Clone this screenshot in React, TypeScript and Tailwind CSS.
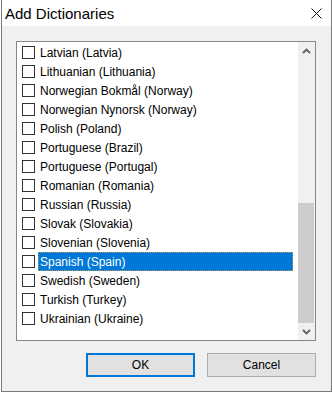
import React from "react";

const items = [
  "Latvian (Latvia)",
  "Lithuanian (Lithuania)",
  "Norwegian Bokmål (Norway)",
  "Norwegian Nynorsk (Norway)",
  "Polish (Poland)",
  "Portuguese (Brazil)",
  "Portuguese (Portugal)",
  "Romanian (Romania)",
  "Russian (Russia)",
  "Slovak (Slovakia)",
  "Slovenian (Slovenia)",
  "Spanish (Spain)",
  "Swedish (Sweden)",
  "Turkish (Turkey)",
  "Ukrainian (Ukraine)",
];

function Chevron({ up }: { up?: boolean }) {
  return (
    <svg width="9" height="6" viewBox="0 0 9 6">
      <path
        d={up ? "M1 5 L4.5 1.5 L8 5" : "M1 1 L4.5 4.5 L8 1"}
        fill="none"
        stroke="#606060"
        strokeWidth="1.8"
      />
    </svg>
  );
}

export default function App() {
  return (
    <div
      className="w-[332px] h-[394px] bg-white"
      style={{ fontFamily: '"Liberation Sans", Arial, sans-serif' }}
    >
      <div className="ml-[1px] w-[331px] h-[392px] border-l border-r border-b border-[#7a7a7a] bg-[#f0f0f0] flex flex-col">
        <div className="h-[26px] bg-white flex items-center justify-between pl-[3px] pr-[9px]">
          <span className="text-[15px] leading-none text-black mt-[1px]">Add Dictionaries</span>
          <svg width="11" height="11" viewBox="0 0 11 11" className="mt-[1px]">
            <path d="M0.5 0.5 L10.5 10.5 M10.5 0.5 L0.5 10.5" stroke="#111" strokeWidth="1" />
          </svg>
        </div>
        <div className="ml-[14px] mt-[15px] w-[300px] h-[300px] border border-[#828790] bg-white flex">
          <div className="flex-1 pt-[1px] flex flex-col">
            {items.map((it, i) => {
              const sel = i === 11;
              return (
                <div key={it} className="h-[19px] flex items-center pl-[5px]">
                  <div className="w-[13px] h-[13px] border border-[#333] bg-white shrink-0" />
                  <div
                    className={
                      sel
                        ? "ml-[3px] w-[255px] h-[19px] bg-[#0078d7] text-white border border-dotted border-[#b89a5c] flex items-center pl-[1px]"
                        : "ml-[3px] h-[19px] text-black flex items-center pl-[2px]"
                    }
                  >
                    <span className="text-[12px] leading-none">{it}</span>
                  </div>
                </div>
              );
            })}
          </div>
          <div className="w-[17px] bg-[#f0f0f0] flex flex-col">
            <div className="h-[17px] flex items-center justify-center">
              <Chevron up />
            </div>
            <div className="flex-1 flex flex-col justify-end">
              <div className="h-[120px] mr-[1px] bg-[#cdcdcd]" />
            </div>
            <div className="h-[17px] flex items-center justify-center">
              <Chevron />
            </div>
          </div>
        </div>
        <div className="mt-[12px] ml-[84px] flex gap-[12px]">
          <button className="w-[109px] h-[24px] bg-[#e1e1e1] border-2 border-[#0078d7] text-[12px] text-black flex items-center justify-center">
            OK
          </button>
          <button className="w-[109px] h-[24px] bg-[#e1e1e1] border border-[#adadad] text-[12px] text-black flex items-center justify-center">
            Cancel
          </button>
        </div>
      </div>
    </div>
  );
}
